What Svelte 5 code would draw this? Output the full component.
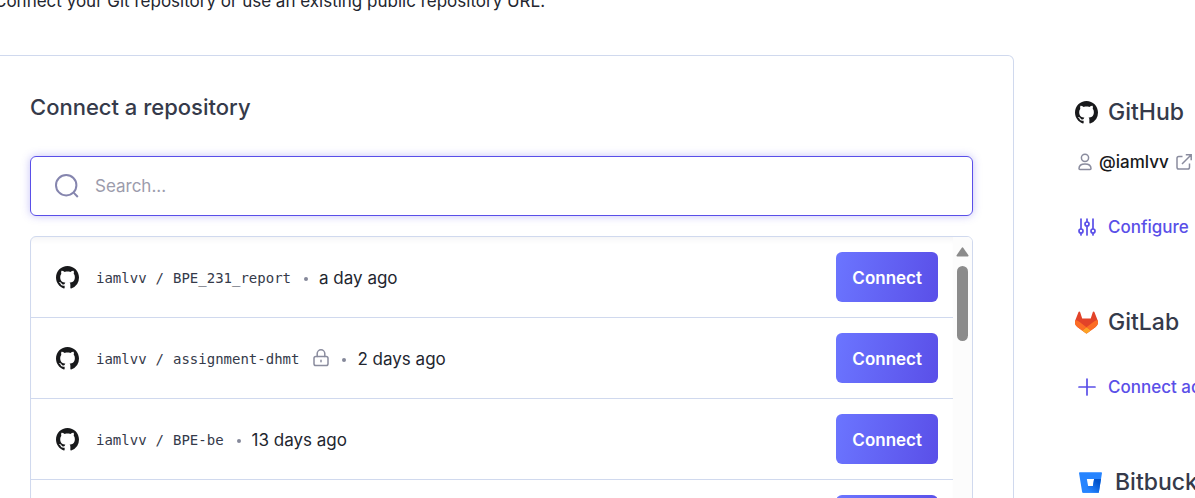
<script>
  let query = $state('');

  const repos = [
    { owner: 'iamlvv', name: 'BPE_231_report', updated: 'a day ago', locked: false },
    { owner: 'iamlvv', name: 'assignment-dhmt', updated: '2 days ago', locked: true },
    { owner: 'iamlvv', name: 'BPE-be', updated: '13 days ago', locked: false },
    { owner: 'iamlvv', name: 'BPE-fe', updated: '13 days ago', locked: false }
  ];

  const shown = $derived(repos.filter((r) => r.name.toLowerCase().includes(query.toLowerCase())));
</script>

{#snippet github()}
  <svg class="brand" viewBox="0 0 16 16" aria-hidden="true">
    <path fill="#18191b" d="M8 0C3.58 0 0 3.58 0 8c0 3.54 2.29 6.53 5.47 7.59.4.07.55-.17.55-.38 0-.19-.01-.82-.01-1.49-2.01.37-2.53-.49-2.69-.94-.09-.23-.48-.94-.82-1.13-.28-.15-.68-.52-.01-.53.63-.01 1.08.58 1.23.82.72 1.21 1.87.87 2.33.66.07-.52.28-.87.51-1.07-1.78-.2-3.64-.89-3.64-3.95 0-.87.31-1.59.82-2.15-.08-.2-.36-1.02.08-2.12 0 0 .67-.21 2.2.82.64-.18 1.32-.27 2-.27s1.36.09 2 .27c1.53-1.04 2.2-.82 2.2-.82.44 1.1.16 1.92.08 2.12.51.56.82 1.27.82 2.15 0 3.07-1.87 3.75-3.65 3.95.29.25.54.73.54 1.48 0 1.07-.01 1.93-.01 2.2 0 .21.15.46.55.38A8.01 8.01 0 0 0 16 8c0-4.42-3.58-8-8-8z" />
  </svg>
{/snippet}

<div class="page">
  <p class="intro">Connect your Git repository or use an existing public repository URL.</p>
  <div class="columns">
    <main class="panel">
      <h2>Connect a repository</h2>
      <label class="search">
        <svg viewBox="0 0 24 24" aria-hidden="true">
          <circle cx="11.2" cy="11.2" r="10.2" />
          <path d="M18.400 18.400 22.800 23" />
        </svg>
        <input type="text" placeholder="Search..." aria-label="Search repositories" bind:value={query} />
      </label>
      <div class="list">
        <ul>
          {#each shown as repo}
            <li>
              {@render github()}
              <span class="path"><span>{repo.owner}</span><span>/</span><span>{repo.name}</span></span>
              {#if repo.locked}
                <svg class="lock" viewBox="0 0 16 18" aria-hidden="true">
                  <rect x="1" y="7.5" width="14" height="9" rx="1.8" />
                  <path d="M4.2 7.5V4.6a3.8 3.8 0 0 1 7.6 0v2.9M8 11.200v1.600" />
                </svg>
              {/if}
              <span class="dot"></span>
              <span class="time">{repo.updated}</span>
              <button type="button">Connect</button>
            </li>
          {/each}
        </ul>
        <div class="scrollbar" aria-hidden="true">
          <svg viewBox="0 0 13 10"><path d="M5.6 1a1.1 1.1 0 0 1 1.8 0l5 7.2c.4.7 0 1.3-.7 1.3H1.300C.6 9.500.2 8.900.6 8.200z" /></svg>
          <div class="thumb"></div>
        </div>
      </div>
    </main>
    <aside>
      <section>
        <h3>{@render github()}GitHub</h3>
        <a class="account" href="#profile">
          <svg viewBox="0 0 14 18" aria-hidden="true">
            <circle cx="7" cy="4.800" r="3.600" />
            <path d="M1 15.600c0-3 2-4.700 6-4.700s6 1.700 6 4.700c0 .6-.3.900-.9.900H1.900c-.6 0-.9-.3-.9-.9z" />
          </svg>
          <span>@iamlvv</span>
          <svg class="out" viewBox="0 0 16 16" aria-hidden="true">
            <path d="M6.500 2.500H2.800C1.700 2.500 1 3.200 1 4.300v8.900C1 14.300 1.700 15 2.800 15h8.900c1.100 0 1.800-.7 1.800-1.800V9.500M6 10 15 1M9.800.8H15.200V6.200" />
          </svg>
        </a>
        <a class="action" href="#configure">
          <svg viewBox="0 0 18 18" aria-hidden="true">
            <path d="M3 1v9.500M3 15.500V17M9 1v2.500M9 8.500V17M15 1v9.500M15 15.500V17" />
            <circle cx="3" cy="13" r="2" /><circle cx="9" cy="6" r="2" /><circle cx="15" cy="13" r="2" />
          </svg>
          Configure
        </a>
      </section>
      <section>
        <h3>
          <svg class="brand" viewBox="0 0 25 24" aria-hidden="true">
            <path fill="#e24329" d="m24.507 9.500-.034-.09L21.082.562a.896.896 0 0 0-1.694.091l-2.290 7.010H7.825L5.535.653a.898.898 0 0 0-1.694-.09L.451 9.411.416 9.500a6.297 6.297 0 0 0 2.090 7.278l.012.010.030.022 5.160 3.867 2.560 1.935 1.554 1.176a1.051 1.051 0 0 0 1.268 0l1.555-1.176 2.560-1.935 5.197-3.890.014-.010A6.297 6.297 0 0 0 24.507 9.500Z" />
            <path fill="#fc6d26" d="m24.507 9.500-.034-.09a11.440 11.440 0 0 0-4.560 2.051l-7.447 5.632 4.742 3.584 5.197-3.890.014-.010A6.297 6.297 0 0 0 24.507 9.500Z" />
            <path fill="#fca326" d="m7.707 20.677 2.560 1.935 1.555 1.176a1.051 1.051 0 0 0 1.268 0l1.555-1.176 2.560-1.935-4.743-3.584-4.755 3.584Z" />
            <path fill="#fc6d26" d="M5.010 11.461a11.430 11.430 0 0 0-4.560-2.050L.416 9.500a6.297 6.297 0 0 0 2.090 7.278l.012.010.030.022 5.160 3.867 4.745-3.584-7.444-5.632Z" />
          </svg>GitLab
        </h3>
        <a class="action add" href="#gitlab">
          <svg viewBox="0 0 18 18" aria-hidden="true"><path d="M9 1v16M1 9h16" /></svg>
          Connect account
        </a>
      </section>
      <section>
        <h3 class="wide">
          <svg class="brand" viewBox="0 0 24 24" aria-hidden="true">
            <defs>
              <linearGradient id="bucket" x1="1" y1="0.2" x2="0.3" y2="0.800">
                <stop offset="0.15" stop-color="#0052cc" /><stop offset="1" stop-color="#2684ff" />
              </linearGradient>
            </defs>
            <path fill="#2684ff" d="M.778 1.213a.768.768 0 0 0-.768.892l3.263 19.810c.084.500.515.868 1.022.873H19.950a.772.772 0 0 0 .770-.646l3.270-20.030a.768.768 0 0 0-.768-.891zM14.520 15.530H9.522L8.170 8.466h7.561z" />
            <path fill="url(#bucket)" d="M22.950 8.466H15.731L14.520 15.530H9.522L3.620 22.540c.190.160.430.248.675.248H19.950a.772.772 0 0 0 .770-.646z" />
          </svg>Bitbucket
        </h3>
      </section>
    </aside>
  </div>
</div>

<style>
  :global(body) {
    background: #fff;
  }
  .page {
    height: 100vh;
    overflow: hidden;
    box-sizing: border-box;
    font-family: Inter, 'Liberation Sans', sans-serif;
    font-size: 17px;
    color: #23262f;
  }
  .intro {
    margin: -11px 0 0 -6px;
    height: 66px;
    line-height: 24px;
    white-space: nowrap;
  }
  .columns {
    display: grid;
    grid-template-columns: minmax(0, 1fr) 120px;
    column-gap: 61px;
    height: 600px;
  }
  .panel {
    border: 1px solid #d0d9ee;
    border-left: 0;
    border-top-right-radius: 6px;
    padding: 36px 40px 0 30px;
    box-sizing: border-box;
    display: flex;
    flex-direction: column;
  }
  h2 {
    margin: 0 0 34px;
    font-size: 22px;
    line-height: 30px;
    font-weight: 500;
    color: #353a4a;
  }
  .search {
    display: flex;
    align-items: center;
    gap: 16px;
    height: 58px;
    flex: none;
    padding: 0 24px;
    border: 1px solid #5a4fe8;
    border-radius: 6px;
    box-shadow: 0 0 8px rgba(90, 79, 232, 0.35);
  }
  .search svg {
    width: 24px;
    height: 24px;
    fill: none;
    stroke: #8585ae;
    stroke-width: 2;
  }
  input {
    flex: 1;
    min-width: 0;
    border: 0;
    outline: 0;
    padding: 0;
    background: none;
    font: inherit;
    color: inherit;
  }
  input::placeholder {
    color: #9c9cac;
    opacity: 1;
  }
  .list {
    margin-top: 20px;
    flex: 1;
    min-height: 0;
    display: flex;
    border: 1px solid #d0d9ee;
    border-radius: 6px;
    overflow: hidden;
  }
  ul {
    flex: 1;
    min-width: 0;
    margin: 0;
    padding: 0;
    list-style: none;
    box-shadow: inset 0 6px 6px -4px rgba(30, 30, 60, 0.06);
  }
  li {
    display: flex;
    align-items: center;
    height: 80px;
    padding: 0 15px 0 25px;
    border-bottom: 1px solid #d0d9ee;
  }
  .brand {
    width: 23px;
    height: 23px;
    flex: none;
  }
  .path {
    display: flex;
    gap: 9px;
    margin-left: 17px;
    padding-top: 2px;
    font-family: 'DejaVu Sans Mono', monospace;
    font-size: 14px;
    color: #353a4a;
  }
  .time {
    padding-top: 2px;
  }
  .lock {
    width: 16px;
    height: 18px;
    margin-left: 14px;
    fill: none;
    stroke: #8a8c9e;
    stroke-width: 1.5;
    stroke-linecap: round;
  }
  .dot {
    width: 4px;
    height: 4px;
    margin: 4px 11px 0 13px;
    border-radius: 50%;
    background: #85889a;
  }
  button {
    margin-left: auto;
    padding: 2px 16px 0;
    height: 50px;
    border: 0;
    border-radius: 6px;
    background: linear-gradient(100deg, #6b75ff 0%, #5a4fe8 100%);
    color: #fff;
    font: inherit;
    font-weight: 600;
  }
  .scrollbar {
    width: 19px;
    background: #fcfcfc;
    display: flex;
    flex-direction: column;
    align-items: center;
    padding-top: 10px;
  }
  .scrollbar svg {
    width: 13px;
    height: 10px;
    fill: #8b8b8b;
  }
  .thumb {
    width: 11px;
    height: 75px;
    margin-top: 9px;
    border-radius: 6px;
    background: #8b8b8b;
  }
  aside {
    padding-top: 42px;
    white-space: nowrap;
    overflow: hidden;
    display: flex;
    flex-direction: column;
    gap: 70px;
  }
  h3 {
    display: flex;
    align-items: center;
    gap: 10px;
    margin: 0;
    font-size: 23px;
    line-height: 30px;
    font-weight: 500;
    color: #353a4a;
  }
  .wide {
    gap: 13px;
    padding-left: 4px;
  }
  a {
    display: flex;
    align-items: center;
    height: 20px;
    text-decoration: none;
    font-weight: 500;
  }
  a svg {
    flex: none;
    fill: none;
    stroke-width: 1.5;
  }
  .account {
    margin-top: 25px;
    gap: 7px;
    padding-left: 3px;
    color: #18191b;
  }
  .account svg {
    width: 14px;
    height: 18px;
    stroke: #8a8c9e;
  }
  .account .out {
    width: 16px;
    height: 16px;
  }
  .action {
    margin-top: 45px;
    gap: 12px;
    padding-left: 3px;
    color: #5a4fe8;
  }
  .add {
    margin-top: 40px;
  }
  .action svg {
    width: 18px;
    height: 18px;
    stroke: #5a4fe8;
    stroke-width: 1.7;
    stroke-linecap: round;
  }
</style>
